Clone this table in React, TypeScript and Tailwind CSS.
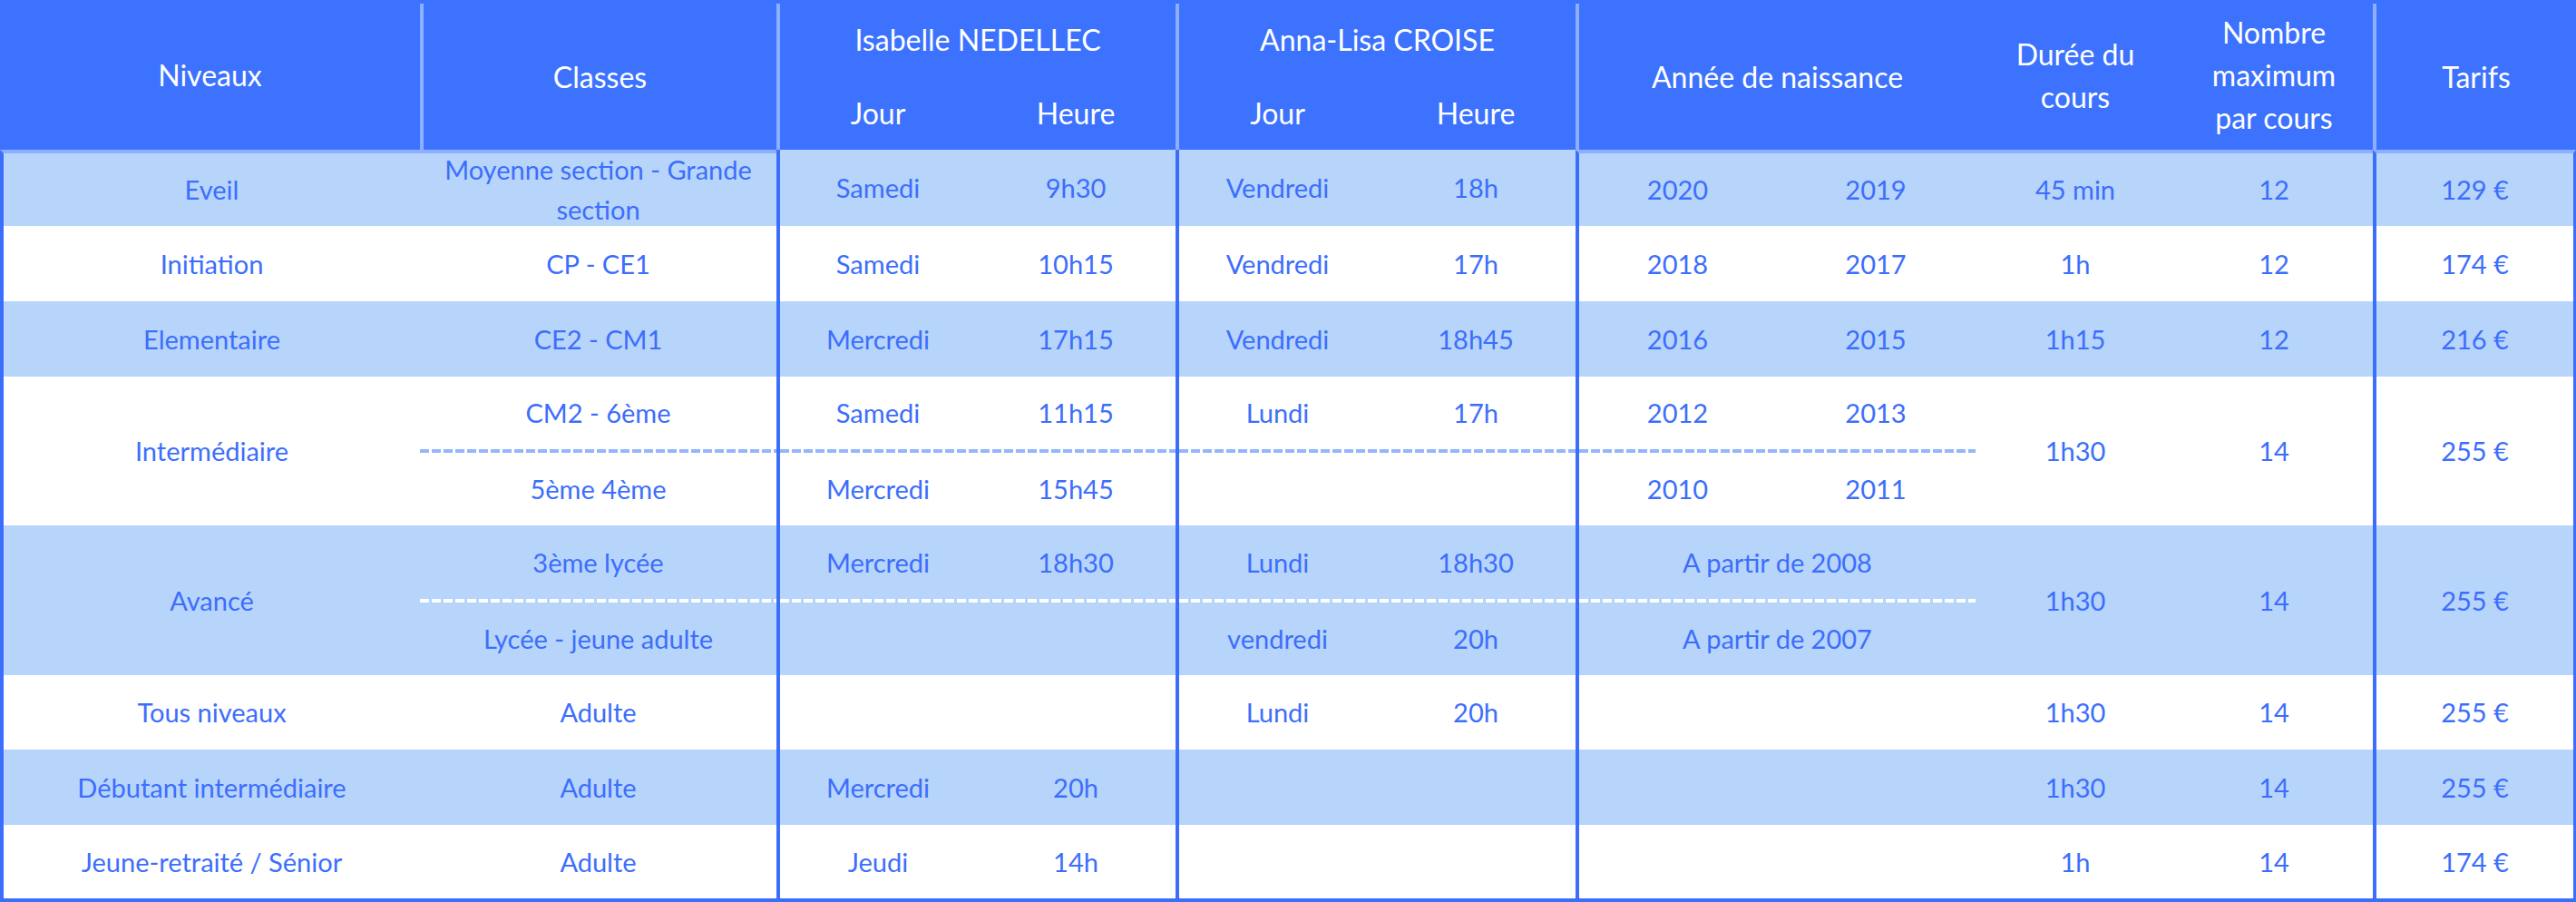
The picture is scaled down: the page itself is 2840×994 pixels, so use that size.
import * as React from "react";

// grid columns: niveaux | classes | isabelle (jour, heure) | anna-lisa (jour, heure) | naissance x2 | durée | nombre | tarifs
const COLS =
  "grid grid-cols-[463px_393px_220px_220px_221px_220px_221px_220px_220px_218px_224px]";

const BLUE = "bg-[#b7d4fb]";
const WHITE = "bg-white";
const EDGE = "border-l-4 border-[#3c6efc]";

type Row = {
  niveau: string;
  classe: React.ReactNode;
  iJour: string;
  iHeure: string;
  aJour: string;
  aHeure: string;
  y1: string;
  y2: string;
  duree: string;
  max: string;
  tarif: string;
};

type SubRow = {
  classe: string;
  iJour: string;
  iHeure: string;
  aJour: string;
  aHeure: string;
  annee: [string, string] | string;
};

type Double = {
  niveau: string;
  subs: [SubRow, SubRow];
  duree: string;
  max: string;
  tarif: string;
};

function Cell({
  children,
  className = "",
}: {
  children?: React.ReactNode;
  className?: string;
}) {
  return (
    <div className={`flex items-center justify-center text-center ${className}`}>
      {children}
    </div>
  );
}

function HeadCell({
  children,
  className = "",
}: {
  children?: React.ReactNode;
  className?: string;
}) {
  return (
    <div
      className={`flex items-center justify-center text-center text-white leading-[47px] ${className}`}
    >
      {children}
    </div>
  );
}

function SingleRow({ r, bg, first }: { r: Row; bg: string; first?: boolean }) {
  const stripe = first ? "border-t-4 border-t-[#8cb0ff]" : "";
  return (
    <>
      <Cell className={`${bg} border-l-4 border-l-[#3c6efc] ${stripe}`}>{r.niveau}</Cell>
      <Cell className={`${bg} leading-[44px] ${stripe}`}>{r.classe}</Cell>
      <Cell className={`${bg} ${EDGE}`}>{r.iJour}</Cell>
      <Cell className={bg}>{r.iHeure}</Cell>
      <Cell className={`${bg} ${EDGE}`}>{r.aJour}</Cell>
      <Cell className={bg}>{r.aHeure}</Cell>
      <Cell className={`${bg} border-l-4 border-l-[#3c6efc] ${stripe}`}>{r.y1}</Cell>
      <Cell className={`${bg} ${stripe}`}>{r.y2}</Cell>
      <Cell className={`${bg} ${stripe}`}>{r.duree}</Cell>
      <Cell className={`${bg} ${stripe}`}>{r.max}</Cell>
      <Cell className={`${bg} border-l-4 border-l-[#3c6efc] border-r-[3px] border-r-[#3c6efc] ${stripe}`}>
        {r.tarif}
      </Cell>
    </>
  );
}

function Sub({ s, bg }: { s: SubRow; bg: string }) {
  return (
    <>
      <Cell className={bg}>{s.classe}</Cell>
      <Cell className={`${bg} ${EDGE}`}>{s.iJour}</Cell>
      <Cell className={bg}>{s.iHeure}</Cell>
      <Cell className={`${bg} ${EDGE}`}>{s.aJour}</Cell>
      <Cell className={bg}>{s.aHeure}</Cell>
      {typeof s.annee === "string" ? (
        <Cell className={`${bg} ${EDGE} col-span-2`}>{s.annee}</Cell>
      ) : (
        <>
          <Cell className={`${bg} ${EDGE}`}>{s.annee[0]}</Cell>
          <Cell className={bg}>{s.annee[1]}</Cell>
        </>
      )}
    </>
  );
}

function DoubleRow({ d, bg, dash }: { d: Double; bg: string; dash: string }) {
  return (
    <>
      <Cell className={`${bg} row-span-3 border-l-4 border-l-[#3c6efc]`}>{d.niveau}</Cell>
      <Sub s={d.subs[0]} bg={bg} />
      <Cell className={`${bg} row-span-3`}>{d.duree}</Cell>
      <Cell className={`${bg} row-span-3`}>{d.max}</Cell>
      <Cell className={`${bg} row-span-3 border-l-4 border-l-[#3c6efc] border-r-[3px] border-r-[#3c6efc]`}>
        {d.tarif}
      </Cell>
      {/* dashed separator between the two sub rows */}
      <div className={`${bg} ${dash}`} />
      <div className={`${bg} ${dash} col-span-2 ${EDGE}`} />
      <div className={`${bg} ${dash} col-span-2 ${EDGE}`} />
      <div className={`${bg} ${dash} col-span-2 ${EDGE}`} />
      <Sub s={d.subs[1]} bg={bg} />
    </>
  );
}

const DASH_LIGHT =
  "bg-[repeating-linear-gradient(90deg,#93b6fc_0px,#93b6fc_10px,transparent_10px,transparent_13px)]";
const DASH_WHITE =
  "bg-[repeating-linear-gradient(90deg,#ffffff_0px,#ffffff_10px,transparent_10px,transparent_13px)]";

const top: Row[] = [
  {
    niveau: "Eveil",
    classe: (
      <span>
        Moyenne section - Grande
        <br />
        section
      </span>
    ),
    iJour: "Samedi",
    iHeure: "9h30",
    aJour: "Vendredi",
    aHeure: "18h",
    y1: "2020",
    y2: "2019",
    duree: "45 min",
    max: "12",
    tarif: "129 €",
  },
  {
    niveau: "Initiation",
    classe: "CP - CE1",
    iJour: "Samedi",
    iHeure: "10h15",
    aJour: "Vendredi",
    aHeure: "17h",
    y1: "2018",
    y2: "2017",
    duree: "1h",
    max: "12",
    tarif: "174 €",
  },
  {
    niveau: "Elementaire",
    classe: "CE2 - CM1",
    iJour: "Mercredi",
    iHeure: "17h15",
    aJour: "Vendredi",
    aHeure: "18h45",
    y1: "2016",
    y2: "2015",
    duree: "1h15",
    max: "12",
    tarif: "216 €",
  },
];

const intermediaire: Double = {
  niveau: "Intermédiaire",
  subs: [
    { classe: "CM2 - 6ème", iJour: "Samedi", iHeure: "11h15", aJour: "Lundi", aHeure: "17h", annee: ["2012", "2013"] },
    { classe: "5ème 4ème", iJour: "Mercredi", iHeure: "15h45", aJour: "", aHeure: "", annee: ["2010", "2011"] },
  ],
  duree: "1h30",
  max: "14",
  tarif: "255 €",
};

const avance: Double = {
  niveau: "Avancé",
  subs: [
    { classe: "3ème lycée", iJour: "Mercredi", iHeure: "18h30", aJour: "Lundi", aHeure: "18h30", annee: "A partir de 2008" },
    { classe: "Lycée - jeune adulte", iJour: "", iHeure: "", aJour: "vendredi", aHeure: "20h", annee: "A partir de 2007" },
  ],
  duree: "1h30",
  max: "14",
  tarif: "255 €",
};

const bottom: Row[] = [
  {
    niveau: "Tous niveaux",
    classe: "Adulte",
    iJour: "",
    iHeure: "",
    aJour: "Lundi",
    aHeure: "20h",
    y1: "",
    y2: "",
    duree: "1h30",
    max: "14",
    tarif: "255 €",
  },
  {
    niveau: "Débutant intermédiaire",
    classe: "Adulte",
    iJour: "Mercredi",
    iHeure: "20h",
    aJour: "",
    aHeure: "",
    y1: "",
    y2: "",
    duree: "1h30",
    max: "14",
    tarif: "255 €",
  },
  {
    niveau: "Jeune-retraité / Sénior",
    classe: "Adulte",
    iJour: "Jeudi",
    iHeure: "14h",
    aJour: "",
    aHeure: "",
    y1: "",
    y2: "",
    duree: "1h",
    max: "14",
    tarif: "174 €",
  },
];

export default function App() {
  const line = "border-l-4 border-l-[#8cb0ff]";
  return (
    <div className="w-[2840px] h-[994px] bg-white font-['Lato','Open_Sans',sans-serif]">
      {/* header */}
      <div className={`${COLS} grid-rows-[83px_82px] bg-[#3c72fe] text-[32px]`}>
        <HeadCell className="row-span-2">Niveaux</HeadCell>
        <div className="row-span-2 pt-1 flex">
          <HeadCell className={`${line} flex-1`}>Classes</HeadCell>
        </div>
        <div className="col-span-2 pt-1 flex">
          <HeadCell className={`${line} flex-1`}>Isabelle NEDELLEC</HeadCell>
        </div>
        <div className="col-span-2 pt-1 flex">
          <HeadCell className={`${line} flex-1`}>Anna-Lisa CROISE</HeadCell>
        </div>
        <div className="col-span-2 row-span-2 pt-1 flex">
          <HeadCell className={`${line} flex-1`}>Année de naissance</HeadCell>
        </div>
        <HeadCell className="row-span-2">
          <span>
            Durée du
            <br />
            cours
          </span>
        </HeadCell>
        <HeadCell className="row-span-2">
          <span>
            Nombre
            <br />
            maximum
            <br />
            par cours
          </span>
        </HeadCell>
        <div className="row-span-2 pt-1 flex">
          <HeadCell className={`${line} flex-1`}>Tarifs</HeadCell>
        </div>
        <HeadCell className={line}>Jour</HeadCell>
        <HeadCell>Heure</HeadCell>
        <HeadCell className={line}>Jour</HeadCell>
        <HeadCell>Heure</HeadCell>
      </div>

      {/* body */}
      <div
        className={`${COLS} grid-rows-[84px_83px_83px_80px_4px_80px_81px_4px_80px_82px_83px_81px] border-b-4 border-b-[#3c6efc] text-[29px] text-[#3c6efc]`}
      >
        <SingleRow r={top[0]} bg={BLUE} first />
        <SingleRow r={top[1]} bg={WHITE} />
        <SingleRow r={top[2]} bg={BLUE} />
        <DoubleRow d={intermediaire} bg={WHITE} dash={DASH_LIGHT} />
        <DoubleRow d={avance} bg={BLUE} dash={DASH_WHITE} />
        <SingleRow r={bottom[0]} bg={WHITE} />
        <SingleRow r={bottom[1]} bg={BLUE} />
        <SingleRow r={bottom[2]} bg={WHITE} />
      </div>
    </div>
  );
}
